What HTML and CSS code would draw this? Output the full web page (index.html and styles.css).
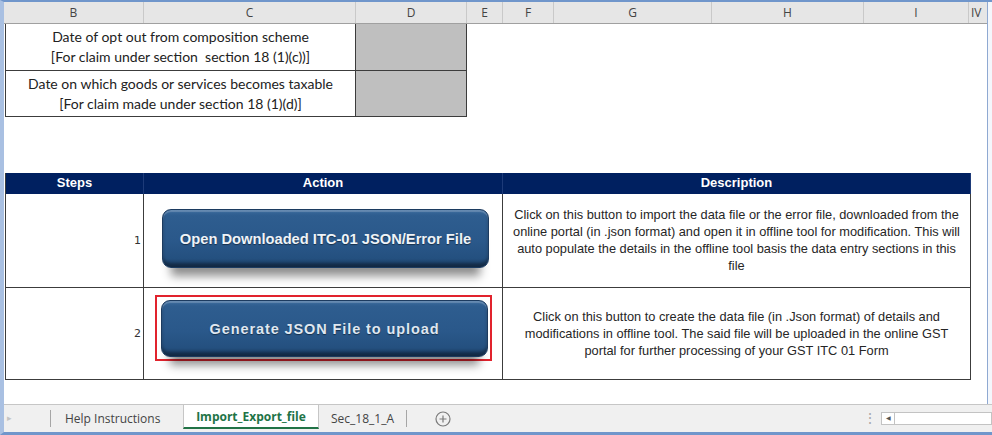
FILE: index.html
```html
<!DOCTYPE html>
<html lang="en">
<head>
  <meta charset="UTF-8" />
  <title>Import_Export_file</title>
  <link rel="stylesheet" href="styles.css">
</head>
<body>

  <div class="window">
    <div class="main">
      <div class="sheet-col">

        <!-- column letters -->
        <div class="colhead">
          <div class="ch col-b">B</div>
          <div class="ch col-c">C</div>
          <div class="ch col-d">D</div>
          <div class="ch col-e">E</div>
          <div class="ch col-f">F</div>
          <div class="ch col-g">G</div>
          <div class="ch col-h">H</div>
          <div class="ch col-i">I</div>
          <div class="ch col-iv">IV</div>
        </div>

        <div class="sheet">
          <div class="dates">
            <div class="dcell row-a">Date of opt out from composition scheme<br>[For claim under section&nbsp; section 18 (1)(c))]</div>
            <div class="dcell row-a entry"></div>
            <div class="dcell row-b">Date on which goods or services becomes taxable<br>[For claim made under section 18 (1)(d)]</div>
            <div class="dcell row-b entry"></div>
          </div>

          <div class="steps">
            <div class="sh">Steps</div>
            <div class="sh">Action</div>
            <div class="sh">Description</div>

            <div class="cell num step-one">1</div>
            <div class="cell action step-one">
              <div class="btn btn-open">Open Downloaded ITC-01 JSON/Error File</div>
            </div>
            <div class="cell desc step-one">Click on this button to import the data file or the error file, downloaded from the<br>online portal (in .json format) and open it in offline tool for modification. This will<br>auto populate the details in the offline tool basis the data entry sections in this<br>file</div>

            <div class="cell num step-two">2</div>
            <div class="cell action action-two step-two">
              <div class="picked">
                <div class="btn btn-generate">Generate JSON File to upload</div>
              </div>
            </div>
            <div class="cell desc step-two">Click on this button to create the data file (in .Json format) of details and<br>modifications in offline tool. The said file will be uploaded in the online GST<br>portal for further processing of your GST ITC 01 Form</div>
          </div>
        </div>
      </div>
      <div class="edge"></div>
    </div>

    <!-- sheet tabs -->
    <div class="tabbar">
      <div class="tab-nav">&#9656;</div>
      <div class="tab-sep"></div>
      <div class="tab tab-help">Help Instructions</div>
      <div class="tab tab-active">Import_Export_file</div>
      <div class="tab tab-sec">Sec_18_1_A</div>
      <div class="tab-sep"></div>
      <div class="tab-add">
        <svg viewBox="0 0 16 16" width="16" height="16" fill="none" stroke="#7a7a7a" stroke-width="1.2">
          <circle cx="8" cy="8" r="7" />
          <path d="M8 4.5 V11.5 M4.5 8 H11.5" />
        </svg>
      </div>
      <div class="tab-fill"></div>
      <div class="tab-grip">&#8942;</div>
      <div class="hscroll">
        <div class="hs-arrow">&#9664;</div>
        <div class="hs-track"></div>
      </div>
    </div>
  </div>

</body>
</html>
```

FILE: styles.css
```css
body {
  margin: 0;
  background: #fff;
}

.window {
  width: 992px;
  height: 435px;
  box-sizing: border-box;
  border-top: 2px solid #7096cb;
  border-bottom: 3px solid #7096cb;
  border-left: 4px solid #a9c0e2;
  display: flex;
  flex-direction: column;
  background: #fff;
  overflow: hidden;
}

.main {
  display: flex;
  height: 402px;
}

.sheet-col {
  width: 983px;
  display: flex;
  flex-direction: column;
}

.edge {
  flex: 1;
  border-left: 1px solid #8fa9d2;
  background: #f4f7fc;
}

/* column letters */
.colhead {
  display: flex;
  height: 22px;
  box-sizing: border-box;
  background: #e6e6e6;
  border-bottom: 1px solid #a0a0a0;
  font-family: "Open Sans", sans-serif;
  font-size: 12px;
  color: #444;
}

.ch {
  box-sizing: border-box;
  border-right: 1px solid #c9c9c9;
  text-align: center;
  line-height: 21px;
}

.col-b { width: 140px; }
.col-c { width: 212px; }
.col-d { width: 111px; }
.col-e { width: 36px; }
.col-f { width: 51px; }
.col-g { width: 158px; }
.col-h { width: 152px; }
.col-i { width: 105px; }
.col-iv { flex: 1; text-align: left; padding-left: 2px; border-right: none; }

.sheet {
  flex: 1;
  padding-left: 1px;
}

/* date rows */
.dates {
  display: grid;
  grid-template-columns: 350px 111px;
  width: 462px;
  border-left: 1px solid #3c3c3c;
}

.dcell {
  box-sizing: border-box;
  border-right: 1px solid #3c3c3c;
  border-bottom: 1px solid #3c3c3c;
  display: flex;
  align-items: center;
  justify-content: center;
  text-align: center;
  font-family: Lato, "Open Sans", sans-serif;
  font-size: 14px;
  line-height: 20px;
  color: #222;
}

.row-a { height: 47px; }
.row-b { height: 46px; }

.entry {
  background: #bfbfbf;
}

/* steps table */
.steps {
  display: grid;
  grid-template-columns: 138px 359px 468px;
  width: 966px;
  margin-top: 56px;
  border-left: 1px solid #3c3c3c;
}

.sh {
  height: 21px;
  box-sizing: border-box;
  background: #002060;
  border-right: 1px solid #1d3a78;
  color: #fff;
  font-family: "Liberation Sans", Arial, sans-serif;
  font-weight: bold;
  font-size: 13px;
  line-height: 20px;
  text-align: center;
}

.cell {
  box-sizing: border-box;
  border-right: 1px solid #3c3c3c;
  border-bottom: 1px solid #3c3c3c;
}

.step-one { height: 94px; }
.step-two { height: 92px; }

.num {
  display: flex;
  align-items: center;
  justify-content: flex-end;
  padding-right: 2px;
  font-family: "DejaVu Sans", sans-serif;
  font-size: 11px;
  color: #333;
}

.action {
  padding: 15px 0 0 18px;
}

.action-two {
  padding: 7px 0 0 11px;
}

.desc {
  display: flex;
  align-items: center;
  justify-content: center;
  text-align: center;
  font-family: "Liberation Sans", Arial, sans-serif;
  font-size: 12.8px;
  line-height: 17px;
  color: #262626;
  padding-bottom: 1px;
}

/* buttons */
.btn {
  width: 327px;
  box-sizing: border-box;
  border: 1px solid #1c3b60;
  border-radius: 9px;
  background: linear-gradient(#3b6a9c 0, #2e5d8f 10%, #2a588a 55%, #24507f 85%, #19395f 100%);
  box-shadow: inset 0 2px 1px rgba(255, 255, 255, 0.22), inset 0 -4px 3px rgba(0, 0, 0, 0.3), 0 17px 9px -9px rgba(0, 0, 0, 0.45);
  display: flex;
  align-items: center;
  justify-content: center;
  font-family: "Liberation Sans", Arial, sans-serif;
  font-weight: bold;
  font-size: 14.7px;
  color: #eef3f8;
  text-shadow: 0 1px 1px rgba(0, 0, 0, 0.45);
}

.btn-open {
  height: 59px;
}

.btn-generate {
  height: 57px;
  font-size: 14.5px;
  color: #dfe7f1;
  letter-spacing: 0.9px;
}

.picked {
  width: fit-content;
  border: 2px solid #e1232d;
  padding: 3px 2px 2px 4px;
}

/* sheet tabs */
.tabbar {
  height: 28px;
  box-sizing: border-box;
  border-top: 1px solid #c6c6c6;
  background: #f0f0f0;
  display: flex;
  align-items: stretch;
  font-family: "Open Sans", sans-serif;
  font-size: 12px;
  color: #444;
}

.tab-nav {
  width: 43px;
  padding-left: 3px;
  color: #c4c4c4;
  font-size: 9px;
  line-height: 26px;
}

.tab-sep {
  width: 1px;
  margin: 5px 0 5px;
  background: #a6a6a6;
}

.tab {
  display: flex;
  align-items: center;
  justify-content: center;
}

.tab-help {
  width: 132px;
  justify-content: flex-start;
  padding-left: 14px;
  box-sizing: border-box;
}

.tab-active {
  width: 136px;
  box-sizing: border-box;
  background: #fff;
  border-left: 1px solid #c6c6c6;
  border-right: 1px solid #c6c6c6;
  border-bottom: 2px solid #217346;
  margin-bottom: 3px;
  color: #217346;
  font-weight: bold;
}

.tab-sec {
  width: 87px;
}

.tab-add {
  width: 28px;
  margin-left: 28px;
  display: flex;
  align-items: center;
}

.tab-fill {
  flex: 1;
}

.tab-grip {
  width: 18px;
  color: #a8a8a8;
  font-size: 14px;
  line-height: 26px;
}

.hscroll {
  width: 111px;
  display: flex;
  align-items: center;
}

.hs-arrow {
  width: 14px;
  height: 13px;
  box-sizing: border-box;
  border: 1px solid #c3c3c3;
  background: #fff;
  color: #555;
  font-size: 6px;
  line-height: 11px;
  text-align: center;
}

.hs-track {
  flex: 1;
  height: 13px;
  box-sizing: border-box;
  border: 1px solid #c3c3c3;
  border-left: none;
  background: #fff;
}
```
